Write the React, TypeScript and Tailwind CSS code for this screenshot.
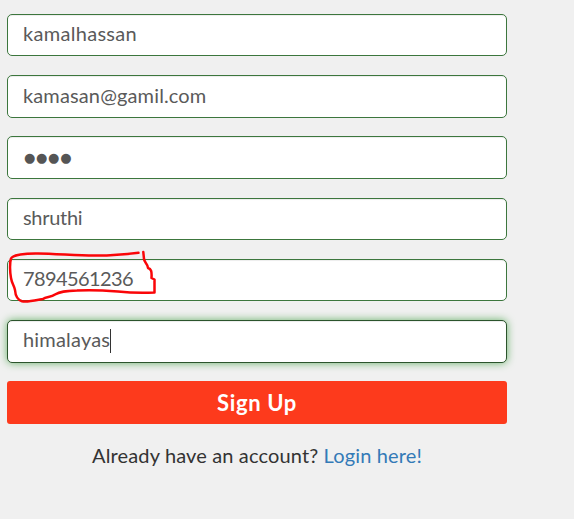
type FieldProps = { text: string; size: string; spacing: string; focused?: boolean };

function Field({ text, size, spacing, focused }: FieldProps) {
  return (
    <div
      className={`flex ${size} w-full items-center rounded-[5px] border bg-white pl-[15px] text-[20px] leading-none text-[#5a5a5a] ${
        focused
          ? "border-[#2b542c] shadow-[inset_0_1px_1px_rgba(0,0,0,0.075),0_0_8px_#67b168]"
          : "border-[#3c763d] shadow-[inset_0_1px_1px_rgba(0,0,0,0.075)]"
      }`}
    >
      <span className={`${spacing} whitespace-nowrap`}>{text}</span>
      {focused && <span className="mt-1 h-6 w-px bg-[#333]" />}
    </div>
  );
}

export default function App() {
  return (
    <main className="h-[519px] w-[574px] overflow-hidden bg-[#f0f0f0] pt-3.5 pl-[7px] font-['Lato',sans-serif]">
      <form className="relative flex w-[500px] flex-col">
        <Field text="kamalhassan" size="h-[42px] mb-[19px] pb-1" spacing="tracking-[0.3px]" />
        <Field text="kamasan@gamil.com" size="h-[43px] mb-[18px] pb-1" spacing="tracking-[0.13px]" />
        <Field
          text="●●●●"
          size="h-[43px] mb-[19px]"
          spacing="pl-px font-['DejaVu_Sans',sans-serif] text-[13px] tracking-[0.7px] text-[#555]"
        />
        <Field text="shruthi" size="h-[42px] mb-[19px] pb-1" spacing="tracking-[-0.3px]" />
        <Field text="7894561236" size="h-[42px] mb-[19px] pb-1" spacing="tracking-[-0.6px]" />
        <Field text="himalayas" size="h-[43px] mb-[18px] pb-[5px]" spacing="tracking-[0.19px]" focused />
        <button
          type="button"
          className="flex h-[43px] items-center justify-center rounded-[3px] bg-[#fd3a1c] text-[22px] leading-none font-bold text-white"
        >
          <span className="tracking-[0.65px] whitespace-nowrap">Sign Up</span>
        </button>
        <svg
          className="pointer-events-none absolute top-[236px] left-0 h-[56px] w-[156px]"
          viewBox="7 250 156 56"
          fill="none"
          stroke="#fa0508"
          strokeWidth="2.5"
          strokeLinecap="round"
          strokeLinejoin="round"
        >
          <path d="M138.5 252.8C129 254 111 255.8 94 255.6C76 255.3 55 253.8 38 253.5C25 253.3 13 255 11 258.5C9.5 263 10 273 11 278C12 284 14 285 15 290C15.5 297 18 300 22 301.3C28 302.5 39 299.5 43 299C46 296.5 51 297.5 55 294.5C60 291.5 65 291 77 290.5C92 289.5 106 290.5 118 291.5C132 293 144 293 154.5 292.5V279.5L151.5 278C152 271 151 269 148 268C147.5 263 144.5 263 144 259L143.3 252" />
        </svg>
      </form>
      <p className="mt-[19px] w-[500px] text-center text-[20px] leading-6 tracking-[0.14px] whitespace-nowrap text-[#333]">
        Already have an account? <a className="text-[#337ab7]">Login here!</a>
      </p>
    </main>
  );
}
